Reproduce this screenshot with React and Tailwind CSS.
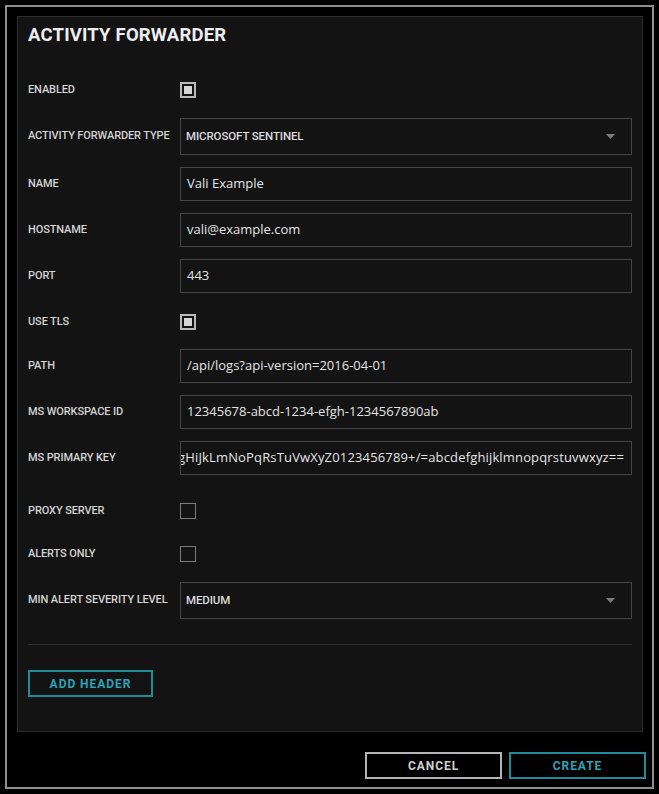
import React from "react";

const labelCls =
  "w-[152px] shrink-0 text-[11px] font-medium uppercase text-[#d4d4d4] tracking-[-0.01em] whitespace-nowrap";

function Check({ checked }) {
  return checked ? (
    <div className="w-[16px] h-[16px] border-2 border-[#b8b8b8] p-[2px]">
      <div className="w-full h-full bg-[#d6d6d6]" />
    </div>
  ) : (
    <div className="w-[16px] h-[16px] border-[1.5px] border-[#7a7a7a]" />
  );
}

function Row({ label, mt, h = "h-[34px]", children }) {
  return (
    <div className={`flex items-center ${mt} ${h}`}>
      <div className={labelCls}>{label}</div>
      <div className="flex-1 h-full flex items-center min-w-0">{children}</div>
    </div>
  );
}

function Input({ value, end }) {
  return (
    <div
      className={`w-full h-full border border-[#454545] bg-[#131313] flex items-center overflow-hidden whitespace-nowrap text-[13px] text-[#e4e4e4] ${
        end ? "justify-end pr-[7px] tracking-[0.012em]" : "pl-[6px]"
      }`}
      style={{ fontFamily: "'Open Sans', Lato, sans-serif" }}
    >
      <span className="shrink-0">{value}</span>
    </div>
  );
}

function Select({ value }) {
  return (
    <div className="w-full h-full border border-[#454545] bg-[#131313] flex items-center justify-between pl-[5px] pr-[16px]">
      <span className="text-[11.5px] font-medium uppercase text-[#dcdcdc] tracking-[-0.01em]">
        {value}
      </span>
      <svg width="9" height="5" viewBox="0 0 9 5">
        <path d="M0 0 L9 0 L4.5 5 Z" fill="#7c7c7c" />
      </svg>
    </div>
  );
}

export default function App() {
  return (
    <div
      className="w-[659px] h-[794px] bg-black p-[5px]"
      style={{ fontFamily: "Roboto, 'Liberation Sans', sans-serif" }}
    >
      <div className="w-[649px] h-[784px] border-2 border-[#8e8e8e] flex flex-col pl-[10px] pr-[9px] pt-[9px]">
        <div className="h-[716px] border border-[#2c2c2c] bg-[#131313] px-[10px] flex flex-col">
          <div className="h-[38px] flex items-center text-[18.5px] font-bold text-[#ededed] tracking-[0.01em]">
            ACTIVITY FORWARDER
          </div>
          <Row label="Enabled" mt="mt-[18px]">
            <Check checked />
          </Row>
          <Row label="Activity Forwarder Type" mt="mt-[11px]" h="h-[37px]">
            <Select value="Microsoft Sentinel" />
          </Row>
          <Row label="Name" mt="mt-[12px]">
            <Input value="Vali Example" />
          </Row>
          <Row label="Hostname" mt="mt-[12px]">
            <Input value="vali@example.com" />
          </Row>
          <Row label="Port" mt="mt-[12px]">
            <Input value="443" />
          </Row>
          <Row label="Use TLS" mt="mt-[12px]">
            <Check checked />
          </Row>
          <Row label="Path" mt="mt-[10px]">
            <Input value="/api/logs?api-version=2016-04-01" />
          </Row>
          <Row label="MS Workspace ID" mt="mt-[12px]">
            <Input value="12345678-abcd-1234-efgh-1234567890ab" />
          </Row>
          <Row label="MS Primary Key" mt="mt-[12px]">
            <Input
              end
              value="gHiJkLmNoPqRsTuVwXyZ0123456789+/=abcdefghijklmnopqrstuvwxyz=="
            />
          </Row>
          <Row label="Proxy Server" mt="mt-[19px]">
            <Check />
          </Row>
          <Row label="Alerts Only" mt="mt-[9px]">
            <Check />
          </Row>
          <Row label="Min Alert Severity Level" mt="mt-[11px]" h="h-[37px]">
            <Select value="Medium" />
          </Row>
          <div className="mt-[25px] h-px bg-[#2e2e2e]" />
          <div className="mt-[25px]">
            <button className="w-[125px] h-[27px] border-2 border-[#1f8c9c] text-[#2aa3b6] text-[12px] font-bold tracking-[0.08em]">
              ADD HEADER
            </button>
          </div>
        </div>
        <div className="flex justify-end gap-[7px] mt-[20px] mr-[-3px]">
          <button className="w-[137px] h-[27px] border-2 border-[#b4b4b4] text-[#cfcfcf] text-[12px] font-bold tracking-[0.08em]">
            CANCEL
          </button>
          <button className="w-[137px] h-[27px] border-2 border-[#1f8c9c] text-[#2aa3b6] text-[12px] font-bold tracking-[0.08em]">
            CREATE
          </button>
        </div>
      </div>
    </div>
  );
}
